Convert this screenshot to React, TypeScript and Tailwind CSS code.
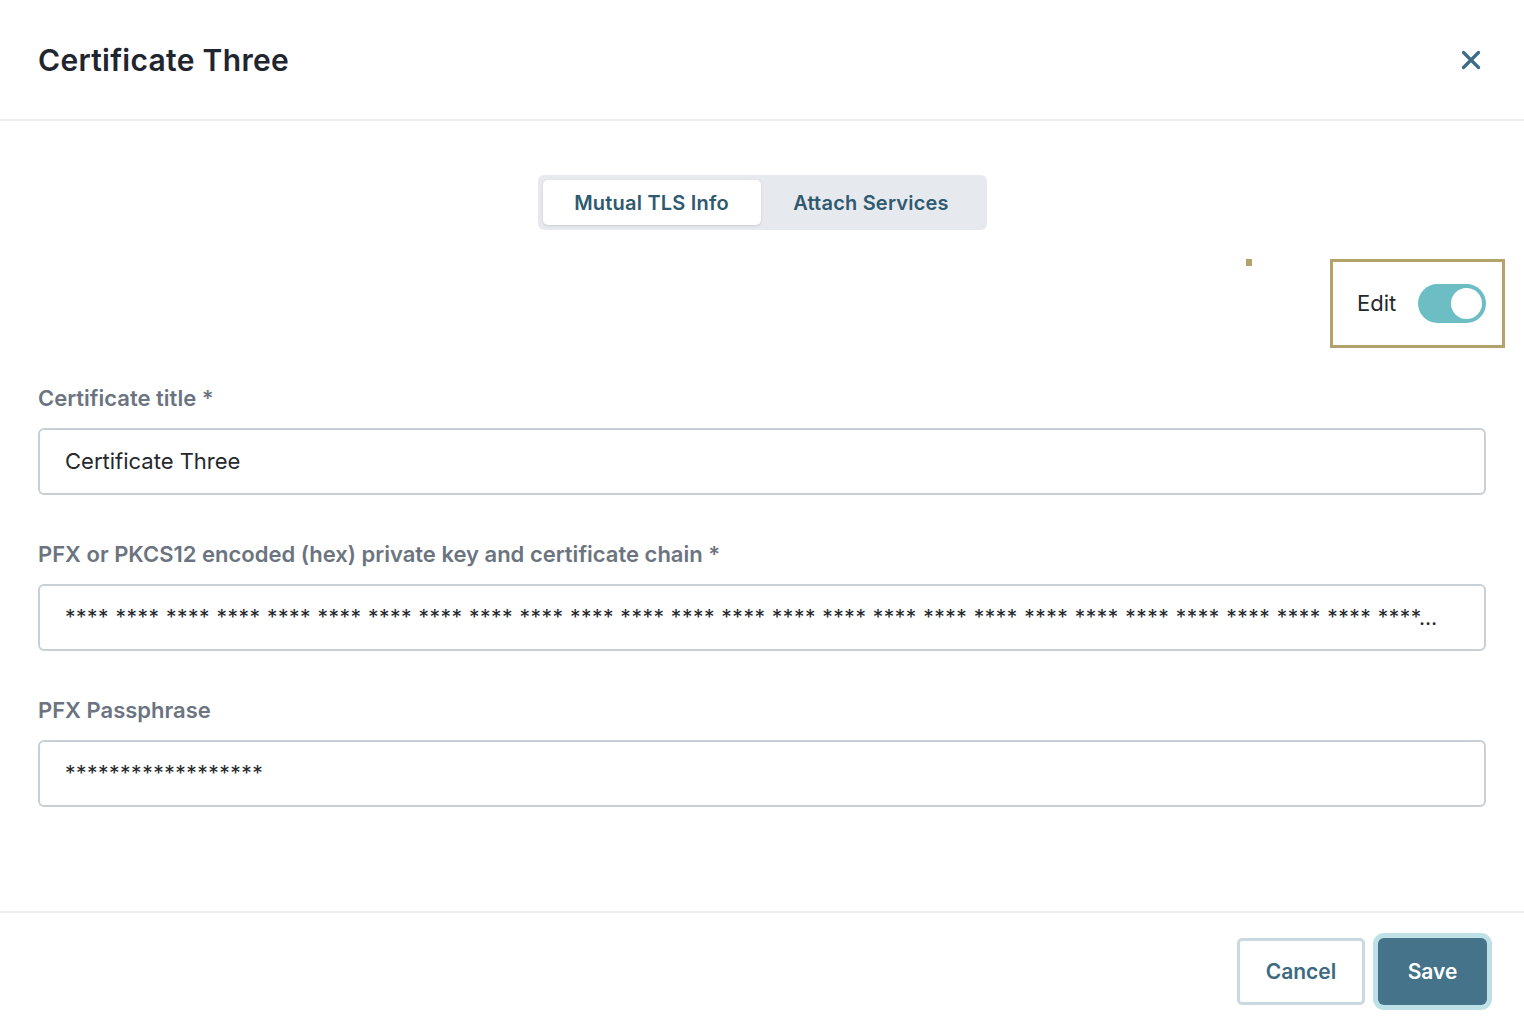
import { X } from "lucide-react";

const chain = Array.from({ length: 27 }, () => "****").join(" ") + "…";

function Field({ label, value, small }: { label: string; value: string; small?: boolean }) {
  return (
    <div className="flex flex-col">
      <label className="text-[22px] leading-[28px] font-semibold text-[#6b7480]">{label}</label>
      <div className="mt-[16px] h-[67px] rounded-[6px] border-2 border-[#c9cfd6] bg-white flex items-center px-[25px]">
        <span
          className={
            small
              ? "block w-full whitespace-nowrap text-[21px] tracking-[0.5px] text-[#25282d]"
              : "block w-full whitespace-nowrap text-[22px] text-[#25282d]"
          }
        >
          {value}
        </span>
      </div>
    </div>
  );
}

export default function App() {
  return (
    <div className="w-[1524px] h-[1030px] bg-white flex flex-col font-['Inter',sans-serif]">
      <header className="h-[121px] border-b-2 border-[#edf0f2] flex items-center justify-between pl-[38px] pr-[38px]">
        <h1 className="text-[30px] font-semibold text-[#1f2630] tracking-[0.3px] mt-[1px]">Certificate Three</h1>
        <X className="h-[30px] w-[30px] text-[#3e6c87]" strokeWidth={2.6} />
      </header>

      <main className="flex-1 px-[38px]">
        <div className="mt-[54px] flex justify-center">
          <div className="flex rounded-[6px] bg-[#e6eaee] p-[5px]">
            <button className="h-[45px] w-[218px] rounded-[5px] bg-white text-[20px] tracking-[0.2px] font-semibold text-[#2f5a70] shadow-sm">
              Mutual TLS Info
            </button>
            <button className="h-[45px] w-[221px] text-[20px] tracking-[0.2px] font-semibold text-[#2f5a70]">
              Attach Services
            </button>
          </div>
        </div>

        <div className="mt-[29px] flex justify-end items-start -mr-[19px]">
          <div className="h-[7px] w-[6px] bg-[#b3a26a] mr-[78px]" />
          <div className="h-[89px] w-[175px] border-[3px] border-[#b3a26a] flex items-center pl-[24px] gap-[22px]">
            <span className="text-[22px] text-[#25282d]">Edit</span>
            <div className="h-[39px] w-[68px] rounded-full bg-[#6dbdc5] flex items-center justify-end pr-[4px]">
              <div className="h-[31px] w-[31px] rounded-full bg-white" />
            </div>
          </div>
        </div>

        <div className="mt-[36px] flex flex-col gap-[45px]">
          <Field label="Certificate title *" value="Certificate Three" />
          <Field label="PFX or PKCS12 encoded (hex) private key and certificate chain *" value={chain} small />
          <Field label="PFX Passphrase" value="******************" small />
        </div>
      </main>

      <footer className="h-[119px] border-t-2 border-[#edf0f2] flex items-center justify-end gap-[13px] pr-[37px]">
        <button className="h-[67px] w-[128px] rounded-[5px] border-[3px] border-[#c8d9df] bg-white text-[21px] font-semibold text-[#3c6a80]">
          Cancel
        </button>
        <button className="h-[67px] w-[109px] rounded-[6px] bg-[#44738a] text-[21px] font-semibold text-white ring-[5px] ring-[#bde1e6]">
          Save
        </button>
      </footer>
    </div>
  );
}
